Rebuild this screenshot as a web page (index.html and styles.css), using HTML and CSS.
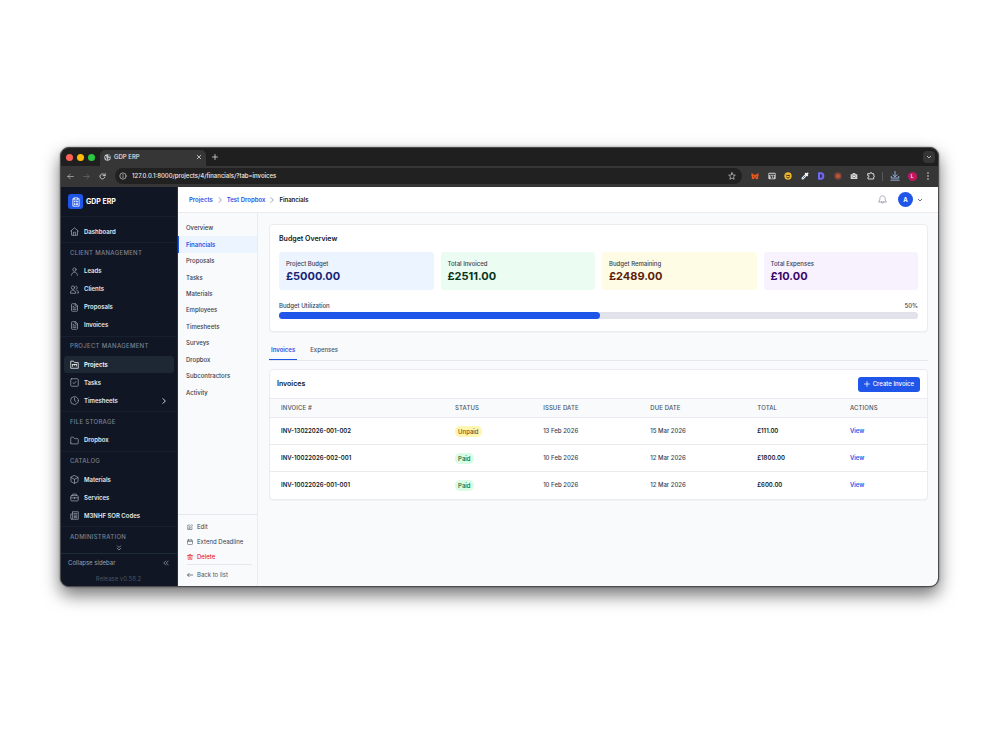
FILE: index.html
```html
<!DOCTYPE html>
<html lang="en">
<head>
<meta charset="utf-8">
<title>GDP ERP</title>
<link rel="stylesheet" href="styles.css">
</head>
<body>
<svg class="defs" aria-hidden="true">
  <symbol id="doc" viewBox="0 0 24 24"><path d="M14 2H6a2 2 0 0 0-2 2v16a2 2 0 0 0 2 2h12a2 2 0 0 0 2-2V8zM14 2v6h6M8 9h2M8 13h8M8 17h8"/></symbol>
  <symbol id="chev" viewBox="0 0 24 24"><path d="m9 5 7 7-7 7"/></symbol>
  <symbol id="down" viewBox="0 0 24 24"><path d="m5 9 7 7 7-7"/></symbol>
</svg>
<div class="window">
  <div class="tabstrip">
    <div class="lights"><i class="red"></i><i class="yellow"></i><i class="green"></i></div>
    <div class="tab">
      <svg class="s7" viewBox="0 0 24 24"><circle cx="12" cy="12" r="11" fill="#c3c8ce"/><path fill="#4a4d52" d="M3 8c4-1 7 0 6 3s3 4 2 9l-4-1c1-4-4-4-4-11M22 9c-4 1-8 0-8-3s2-3 1-4c4 1 6 4 7 7M14 14c2-2 5-1 7 0l-5 6c-2-1-3-4-2-6"/></svg>
      <span>GDP ERP</span>
      <button class="plain" aria-label="Close tab"><svg class="icon s6 bold" viewBox="0 0 24 24"><path d="m5 5 14 14M19 5 5 19"/></svg></button>
    </div>
    <button class="plain newtab" aria-label="New tab"><svg class="icon s6 bold" viewBox="0 0 24 24"><path d="M12 2v20M2 12h20"/></svg></button>
    <button class="tabsearch" aria-label="Search tabs"><svg class="icon s6 bold"><use href="#down"/></svg></button>
  </div>
  <div class="toolbar">
    <div class="history">
      <button class="plain" aria-label="Back"><svg class="icon s7" viewBox="0 0 24 24"><path d="M22 12H3M11 4l-8 8 8 8"/></svg></button>
      <button class="plain dim" aria-label="Forward"><svg class="icon s7" viewBox="0 0 24 24"><path d="M2 12h19M13 4l8 8-8 8"/></svg></button>
      <button class="plain" aria-label="Reload"><svg class="icon s7 bold" viewBox="0 0 24 24"><path d="M20 14a8.500 8.500 0 1 1-2-8l3 3M21 2v7h-7"/></svg></button>
    </div>
    <div class="address">
      <svg class="icon s8" viewBox="0 0 24 24"><circle cx="12" cy="12" r="9.500"/><path d="M12 11v6M12 7v1"/></svg>
      <input class="url" aria-label="Address" value="127.0.0.1:8000/projects/4/financials/?tab=invoices">
      <svg class="icon s8" viewBox="0 0 24 24"><path d="m12 2 3 7 7 .6-5.400 4.700L18.300 22 12 17.900 5.700 22l1.700-7.700L2 9.600 9 9z"/></svg>
    </div>
    <div class="extensions">
      <svg class="s8" viewBox="0 0 24 24"><path fill="#e2571e" d="m2 2 7 6h6l7-6 1 9-2 4 1 5-5 2-3-2h-4l-3 2-5-2 1-5-2-4z"/><path fill="#5b2a18" d="m6 12 4 2-3 1zM18 12l-4 2 3 1zM9 17h6l-1 3h-4z"/></svg>
      <svg class="s8" viewBox="0 0 24 24"><rect x="1" y="2" width="22" height="20" rx="3" fill="#c9c9c9"/><path fill="none" stroke="#303030" stroke-width="3" d="M3 7h18M6 12h4v8M13 12h5l-4 8"/></svg>
      <svg class="s8" viewBox="0 0 24 24"><circle cx="12" cy="12" r="11" fill="#eeb72c"/><path fill="none" stroke="#34301f" stroke-width="3" d="M6 8c2 6 9-1 12 4M7 15c3 4 8 3 10 0"/></svg>
      <svg class="s8" viewBox="0 0 24 24"><path stroke="#f4f6fa" stroke-width="7" stroke-linecap="round" d="m5 19 10-10"/><path stroke="#4d7bc4" stroke-width="3" d="m5 19 8-8"/><path stroke="#f4f6fa" stroke-width="5" stroke-linecap="round" d="m14 5 5 5M17 7l3-3"/></svg>
      <svg class="s8" viewBox="0 0 24 24"><path fill="#7068f3" d="M3 1h9a10 11 0 0 1 0 22H3z"/><path fill="#33315f" d="M9 7h3a4 5 0 0 1 0 10H9z"/></svg>
      <svg class="s8" viewBox="0 0 24 24"><path stroke="#d7583d" stroke-width="2" d="M12 1v22M1 12h22M4 4l16 16M20 4 4 20M8 2l8 20M2 16l20-8M16 2 8 22M2 8l20 8"/></svg>
      <svg class="s8" viewBox="0 0 24 24"><path fill="#d5d5d5" d="M2 7h5l2-4h6l2 4h5v14H2z"/><circle cx="12" cy="13" r="4" fill="#fff" stroke="#555" stroke-width="2"/></svg>
      <svg class="icon s8 bold" viewBox="0 0 24 24"><path d="M3 5h6V3q3-2 6 0v2h5v5h1q3 2 0 5h-1v6H3v-6h2q2-3 0-5H3z"/></svg>
    </div>
    <div class="browser-end">
      <span class="divider"></span>
      <svg class="icon s10 download" viewBox="0 0 24 24"><path d="M12 1v12M7 9l5 5 5-5M3 13v4h18v-4M2 22h20"/></svg>
      <span class="profile">L</span>
      <button class="plain" aria-label="Browser menu"><svg class="s8" viewBox="0 0 24 24" fill="#ddd"><circle cx="12" cy="3" r="2.500"/><circle cx="12" cy="12" r="2.500"/><circle cx="12" cy="21" r="2.500"/></svg></button>
    </div>
  </div>
  <div class="app">
    <aside class="sidebar">
      <div class="brand">
        <span class="logo"><svg class="icon s10" viewBox="0 0 24 24"><path d="M8 4H4.500v18h15V4H16M8 2h8v5H8zM8 11h1M12 11h4M8 15h1M12 15h4M8 18h1M12 18h4"/></svg></span>
        <span>GDP ERP</span>
      </div>
      <nav class="nav" aria-label="Main">
        <div class="group">
          <a class="item" href="#"><svg class="icon s9" viewBox="0 0 24 24"><path d="m2 11 10-9 10 9M4 9v13h16V9M9 22v-8h6v8"/></svg>Dashboard</a>
        </div>
        <div class="group">
          <h2>CLIENT MANAGEMENT</h2>
          <a class="item" href="#"><svg class="icon s9" viewBox="0 0 24 24"><circle cx="12" cy="7" r="4.500"/><path d="M4 22c0-11 16-11 16 0"/></svg>Leads</a>
          <a class="item" href="#"><svg class="icon s9" viewBox="0 0 24 24"><circle cx="8" cy="7" r="4.500"/><path d="M1 21c0-10 14-10 14 0zM16 3c5 0 5 8 0 8M18 14c3 1 5 3 5 7h-4"/></svg>Clients</a>
          <a class="item" href="#"><svg class="icon s9"><use href="#doc"/></svg>Proposals</a>
          <a class="item" href="#"><svg class="icon s9"><use href="#doc"/></svg>Invoices</a>
        </div>
        <div class="group">
          <h2>PROJECT MANAGEMENT</h2>
          <a class="item current" href="#"><svg class="icon s9" viewBox="0 0 24 24"><path d="M2 21V3h7l3 4h10v14zM7 12v5M12 12v2M17 12v4M7 12h10"/></svg>Projects</a>
          <a class="item" href="#"><svg class="icon s9" viewBox="0 0 24 24"><rect x="2" y="2" width="20" height="20" rx="2"/><path d="m8 13 3 2 5-6"/></svg>Tasks</a>
          <a class="item" href="#"><svg class="icon s9" viewBox="0 0 24 24"><circle cx="12" cy="12" r="10.500"/><path d="M12 5v7l4 3"/></svg>Timesheets<svg class="icon s8 bold end"><use href="#chev"/></svg></a>
        </div>
        <div class="group">
          <h2>FILE STORAGE</h2>
          <a class="item" href="#"><svg class="icon s9" viewBox="0 0 24 24"><path d="M2 19V5q0-2 2-2h5l3 4h8q2 0 2 2v10q0 2-2 2H4q-2 0-2-2z"/></svg>Dropbox</a>
        </div>
        <div class="group">
          <h2>CATALOG</h2>
          <a class="item" href="#"><svg class="icon s9" viewBox="0 0 24 24"><path d="m12 1.500 9.500 5v11l-9.500 5-9.500-5v-11zM2.500 6.500l9.500 5 9.500-5M12 11.500v11"/></svg>Materials</a>
          <a class="item" href="#"><svg class="icon s9" viewBox="0 0 24 24"><rect x="2" y="7" width="20" height="14" rx="2"/><path d="M7 7V3h10v4M2 13h20M12 12v3"/></svg>Services</a>
          <a class="item" href="#"><svg class="icon s9" viewBox="0 0 24 24"><path d="M7 2h15v20H4q-2 0-2-3V8h5zM7 8v11q0 3-3 3M11 7h7M11 11h7M11 15h7M11 18h7"/></svg>M3NHF SOR Codes</a>
        </div>
        <div class="group">
          <h2>ADMINISTRATION</h2>
          <svg class="icon s6 bold more" viewBox="0 0 24 24"><path d="m5 3 7 7 7-7M5 13l7 7 7-7"/></svg>
        </div>
      </nav>
      <div class="sidefoot">
        <button class="collapse">Collapse sidebar<svg class="icon s6 bold" viewBox="0 0 24 24"><path d="m11 4-8 8 8 8M21 4l-8 8 8 8"/></svg></button>
        <p>Release v0.58.2</p>
      </div>
    </aside>
    <div class="page">
      <header class="topbar">
        <nav class="crumbs" aria-label="Breadcrumb">
          <a href="#">Projects</a><svg class="icon s8"><use href="#chev"/></svg><a href="#">Test Dropbox</a><svg class="icon s8"><use href="#chev"/></svg><span>Financials</span>
        </nav>
        <div class="user">
          <button class="plain bell" aria-label="Notifications"><svg class="icon s9" viewBox="0 0 24 24"><path d="M2 18c3-3 3-6 3-9 0-9 14-9 14 0 0 3 0 6 3 9zM9 18c0 5 6 5 6 0"/></svg></button>
          <span class="avatar">A</span>
          <button class="plain" aria-label="Account menu"><svg class="icon s6 bold"><use href="#down"/></svg></button>
        </div>
      </header>
      <div class="body">
        <aside class="subnav">
          <nav class="sublist" aria-label="Project">
            <a href="#">Overview</a><a class="on" href="#">Financials</a><a href="#">Proposals</a><a href="#">Tasks</a><a href="#">Materials</a><a href="#">Employees</a><a href="#">Timesheets</a><a href="#">Surveys</a><a href="#">Dropbox</a><a href="#">Subcontractors</a><a href="#">Activity</a>
          </nav>
          <div class="actions">
            <button><svg class="icon s6" viewBox="0 0 24 24"><path d="M10 4H3v18h17v-7M8 17l1-5 10-10 4 4-10 10z"/></svg>Edit</button>
            <button><svg class="icon s6" viewBox="0 0 24 24"><rect x="2" y="4" width="20" height="18" rx="3"/><path d="M7 1v6M17 1v6M3 10h18"/></svg>Extend Deadline</button>
            <button class="danger"><svg class="icon s6" viewBox="0 0 24 24"><path d="M2 6h20M8 6V2h8v4M4 6l1 17h14l1-17M10 11v7M14 11v7"/></svg>Delete</button>
            <a href="#"><svg class="icon s6 bold" viewBox="0 0 24 24"><path d="M23 12H2M9 5l-7 7 7 7"/></svg>Back to list</a>
          </div>
        </aside>
        <main class="content">
          <section class="card budget">
            <h1>Budget Overview</h1>
            <div class="tiles">
              <div class="tile blue"><span>Project Budget</span><strong>£5000.00</strong></div>
              <div class="tile mint"><span>Total Invoiced</span><strong>£2511.00</strong></div>
              <div class="tile cream"><span>Budget Remaining</span><strong>£2489.00</strong></div>
              <div class="tile lilac"><span>Total Expenses</span><strong>£10.00</strong></div>
            </div>
            <div class="usage"><span>Budget Utilization</span><span>50%</span></div>
            <div class="track"><div class="fill" style="width:50.22%"></div></div>
          </section>
          <div class="tabs" role="tablist">
            <button role="tab" aria-selected="true">Invoices</button>
            <button role="tab" aria-selected="false">Expenses</button>
          </div>
          <section class="card invoices">
            <div class="cardhead"><h1>Invoices</h1><button class="create"><svg class="icon s6 bold" viewBox="0 0 24 24"><path d="M12 2v20M2 12h20"/></svg>Create Invoice</button></div>
            <table>
              <colgroup><col class="c1"><col class="c2"><col class="c3"><col class="c3"><col class="c4"><col></colgroup>
              <thead><tr><th>INVOICE #</th><th>STATUS</th><th>ISSUE DATE</th><th>DUE DATE</th><th>TOTAL</th><th>ACTIONS</th></tr></thead>
              <tbody>
                <tr><td class="strong">INV-13022026-001-002</td><td><span class="badge unpaid">Unpaid</span></td><td>13 Feb 2026</td><td>15 Mar 2026</td><td class="strong">£111.00</td><td><a href="#">View</a></td></tr>
                <tr><td class="strong">INV-10022026-002-001</td><td><span class="badge">Paid</span></td><td>10 Feb 2026</td><td>12 Mar 2026</td><td class="strong">£1800.00</td><td><a href="#">View</a></td></tr>
                <tr><td class="strong">INV-10022026-001-001</td><td><span class="badge">Paid</span></td><td>10 Feb 2026</td><td>12 Mar 2026</td><td class="strong">£600.00</td><td><a href="#">View</a></td></tr>
              </tbody>
            </table>
          </section>
        </main>
      </div>
    </div>
  </div>
</div>
</body>
</html>
```
FILE: styles.css
```css
* { box-sizing: border-box; }
body { margin: 0; min-height: 100vh; padding: 147px 61px 60px 60px; background: #fff; font: 500 6px/8px Inter, sans-serif; color: #364153; }
h1, h2, p { margin: 0; font: inherit; }
button, input { font: inherit; color: inherit; margin: 0; padding: 0; border: 0; background: none; }
button { display: flex; align-items: center; cursor: pointer; }
a { color: inherit; text-decoration: none; }
.defs { display: none; }
.icon { fill: none; stroke: currentColor; stroke-width: 2; stroke-linecap: round; stroke-linejoin: round; }
.icon.bold { stroke-width: 3; }
svg { flex: none; display: block; }
.s6 { width: 6px; height: 6px; }
.s7 { width: 7px; height: 7px; }
.s8 { width: 8px; height: 8px; }
.s9 { width: 9px; height: 9px; }
.s10 { width: 10px; height: 10px; }

.window { display: flex; flex-direction: column; border: 1px solid #4b4b4d; border-radius: 9px; overflow: hidden; background: #1f1f1f; box-shadow: 0 8px 17px rgba(0,0,0,.55), 0 0 2px rgba(0,0,0,.5); }
.tabstrip { display: flex; align-items: center; height: 18px; padding: 0 3px 0 5px; color: #e3e3e3; }
.lights { display: flex; gap: 4px; width: 34px; }
.lights i { width: 7px; height: 7px; border-radius: 50%; }
.red { background: #fe5f57; }
.yellow { background: #febc0a; }
.green { background: #28c840; }
.tab { display: flex; align-items: center; align-self: flex-end; gap: 3px; width: 106px; height: 16px; padding: 0 4px 2px; background: #363636; border-radius: 5px 5px 0 0; }
.tab span { flex: 1; }
.newtab { margin-left: 6px; }
.tabsearch { margin-left: auto; width: 12px; height: 12px; justify-content: center; border-radius: 4px; background: #363636; }
.toolbar { display: flex; align-items: center; height: 21px; padding: 0 6px 1px; background: #363636; color: #d6d6d6; }
.history { display: flex; gap: 9px; width: 48px; }
.dim { color: #777; }
.address { display: flex; flex: 1; align-items: center; gap: 5px; height: 16px; padding: 0 6px 0 4px; border-radius: 8px; background: #212121; }
.url { flex: 1; min-width: 0; color: #f0f0f0; }
.extensions { display: flex; justify-content: space-between; width: 124px; margin-left: 9px; }
.browser-end { display: flex; align-items: center; justify-content: space-between; width: 50px; margin-left: 7px; }
.divider { width: 1px; height: 9px; background: #595959; }
.download { color: #a9c7fa; }
.profile { width: 9px; height: 9px; border-radius: 50%; background: #c2185b; color: #fff; font-size: 5px; line-height: 9px; text-align: center; }

.app { display: flex; min-height: 399px; }
.sidebar { display: flex; flex-direction: column; width: 117px; flex: none; background: #101624; color: #e5e7eb; font-weight: 600; border-right: 1px solid #2a3240; }
.brand { display: flex; align-items: center; gap: 3px; height: 30px; padding: 0 7px; border-bottom: 1px solid #182030; font-size: 7px; font-weight: 700; color: #fff; }
.logo { display: grid; place-items: center; width: 15px; height: 15px; border-radius: 3px; background: #1f55e8; }
.nav { display: flex; flex: 1; flex-direction: column; justify-content: space-between; padding-top: 6px; }
.group { display: flex; flex-direction: column; gap: 1px; padding: 0 3px 2px; border-bottom: 1px solid #182030; }
.group:last-child { border: 0; }
.group h2 { height: 18px; padding: 5px 6px 0; color: #7a8291; letter-spacing: .05em; font-weight: 500; }
.group:last-child h2 { height: 16px; }
.item { display: flex; align-items: center; gap: 5px; height: 17px; padding: 0 6px; border-radius: 3px; }
.item svg { color: #99a1af; }
.current { background: #1e2734; color: #fff; }
.item.current svg { color: #fff; }
.item .end { margin-left: auto; color: #d1d5dc; }
.more { align-self: center; color: #99a1af; }
.sidefoot { height: 33px; padding: 5px 8px 0 7px; border-top: 1px solid #1e2939; color: #99a1af; font-weight: 400; }
.collapse { width: 100%; justify-content: space-between; }
.sidefoot p { margin-top: 8px; text-align: center; color: #4a5565; }

.page { display: flex; flex: 1; min-width: 0; flex-direction: column; background: #f9fafb; }
.topbar { display: flex; align-items: center; justify-content: space-between; height: 26px; padding: 0 15px 0 11px; background: #fff; border-bottom: 1px solid #e9ebef; }
.crumbs { display: flex; align-items: center; gap: 3px; color: #101828; font-weight: 600; }
.crumbs a { color: #1f55e8; }
.crumbs svg { color: #6a7282; }
.user { display: flex; align-items: center; gap: 4px; }
.bell { color: #8b93a1; margin-right: 7px; }
.avatar { width: 15px; height: 15px; border-radius: 50%; background: #1f55e8; color: #fff; font-weight: 700; line-height: 15px; text-align: center; }
.body { display: flex; flex: 1; }
.subnav { display: flex; flex-direction: column; justify-content: space-between; width: 80px; flex: none; border-right: 1px solid #e9ebef; }
.sublist { display: flex; flex-direction: column; min-height: 181px; margin-top: 7px; }
.sublist a { display: flex; flex: 1; align-items: center; padding-left: 7px; border-left: 1px solid transparent; }
.sublist .on { background: #ebf4ff; border-color: #1f55e8; color: #1f55e8; font-weight: 600; }
.actions { padding: 4px 5px 3px 9px; border-top: 1px solid #e5e7eb; font-weight: 400; }
.actions button, .actions a { display: flex; align-items: center; gap: 4px; height: 15px; }
.actions .danger { color: #e7000b; }
.actions a { height: 19px; padding-top: 1px; border-top: 1px solid #e5e7eb; color: #4a5565; }
.content { flex: 1; min-width: 0; padding: 11px 10px 11px 11px; }
.card { background: #fff; border: 1px solid #eaecf0; border-radius: 4px; overflow: hidden; box-shadow: 0 1px 1px rgba(0,0,0,.03); }
h1 { font-size: 7px; font-weight: 600; color: #101828; }
.budget { padding: 10px 9px 12px; }
.tiles { display: grid; grid-template-columns: repeat(4, 1fr); gap: 7px; margin: 9px 0 12px; }
.tile { display: flex; flex-direction: column; gap: 1px; height: 38px; padding: 8px 7px; border-radius: 3px; }
.tile strong { font-size: 11px; line-height: 14px; font-weight: 700; }
.blue { background: #ebf4ff; } .blue strong { color: #162475; }
.mint { background: #ebfdf2; } .mint strong { color: #07341b; }
.cream { background: #fefce5; } .cream strong { color: #5c200b; }
.lilac { background: #f8f2ff; } .lilac strong { color: #38076c; }
.usage { display: flex; justify-content: space-between; margin-bottom: 2px; }
.track { height: 7px; border-radius: 4px; background: #e1e2ea; }
.fill { height: 100%; border-radius: 4px; background: #1f55e8; }
.tabs { display: flex; gap: 11px; margin: 9px 0 8px; border-bottom: 1px solid #e5e7eb; }
.tabs button { height: 19px; padding: 0 2px; border-bottom: 1px solid transparent; color: #4a5565; }
.tabs [aria-selected=true] { color: #1f55e8; border-color: #1f55e8; font-weight: 600; }
.cardhead { display: flex; align-items: center; justify-content: space-between; height: 28px; padding: 0 7px; }
.create { gap: 3px; height: 15px; padding: 0 6px; border-radius: 3px; background: #1f55e8; color: #fff; }
table { width: 100%; border-collapse: collapse; table-layout: fixed; }
.c1 { width: 26.5%; } .c2 { width: 13.4%; } .c3 { width: 16.3%; } .c4 { width: 14.1%; }
th, td { padding: 0 0 0 11px; text-align: left; }
th { height: 19px; font-weight: 500; letter-spacing: .02em; color: #4a5565; background: #f9fafb; border-top: 1px solid #e9ebef; }
td { height: 27px; border-top: 1px solid #e9ebef; }
.strong { font-weight: 600; color: #101828; }
td a { font-weight: 600; color: #1f55e8; }
.badge { display: inline-block; padding: 0 3px; border-radius: 5px; background: #d9fce5; color: #0a6a30; line-height: 11px; }
.unpaid { background: #fef5b0; color: #894b00; }
```
